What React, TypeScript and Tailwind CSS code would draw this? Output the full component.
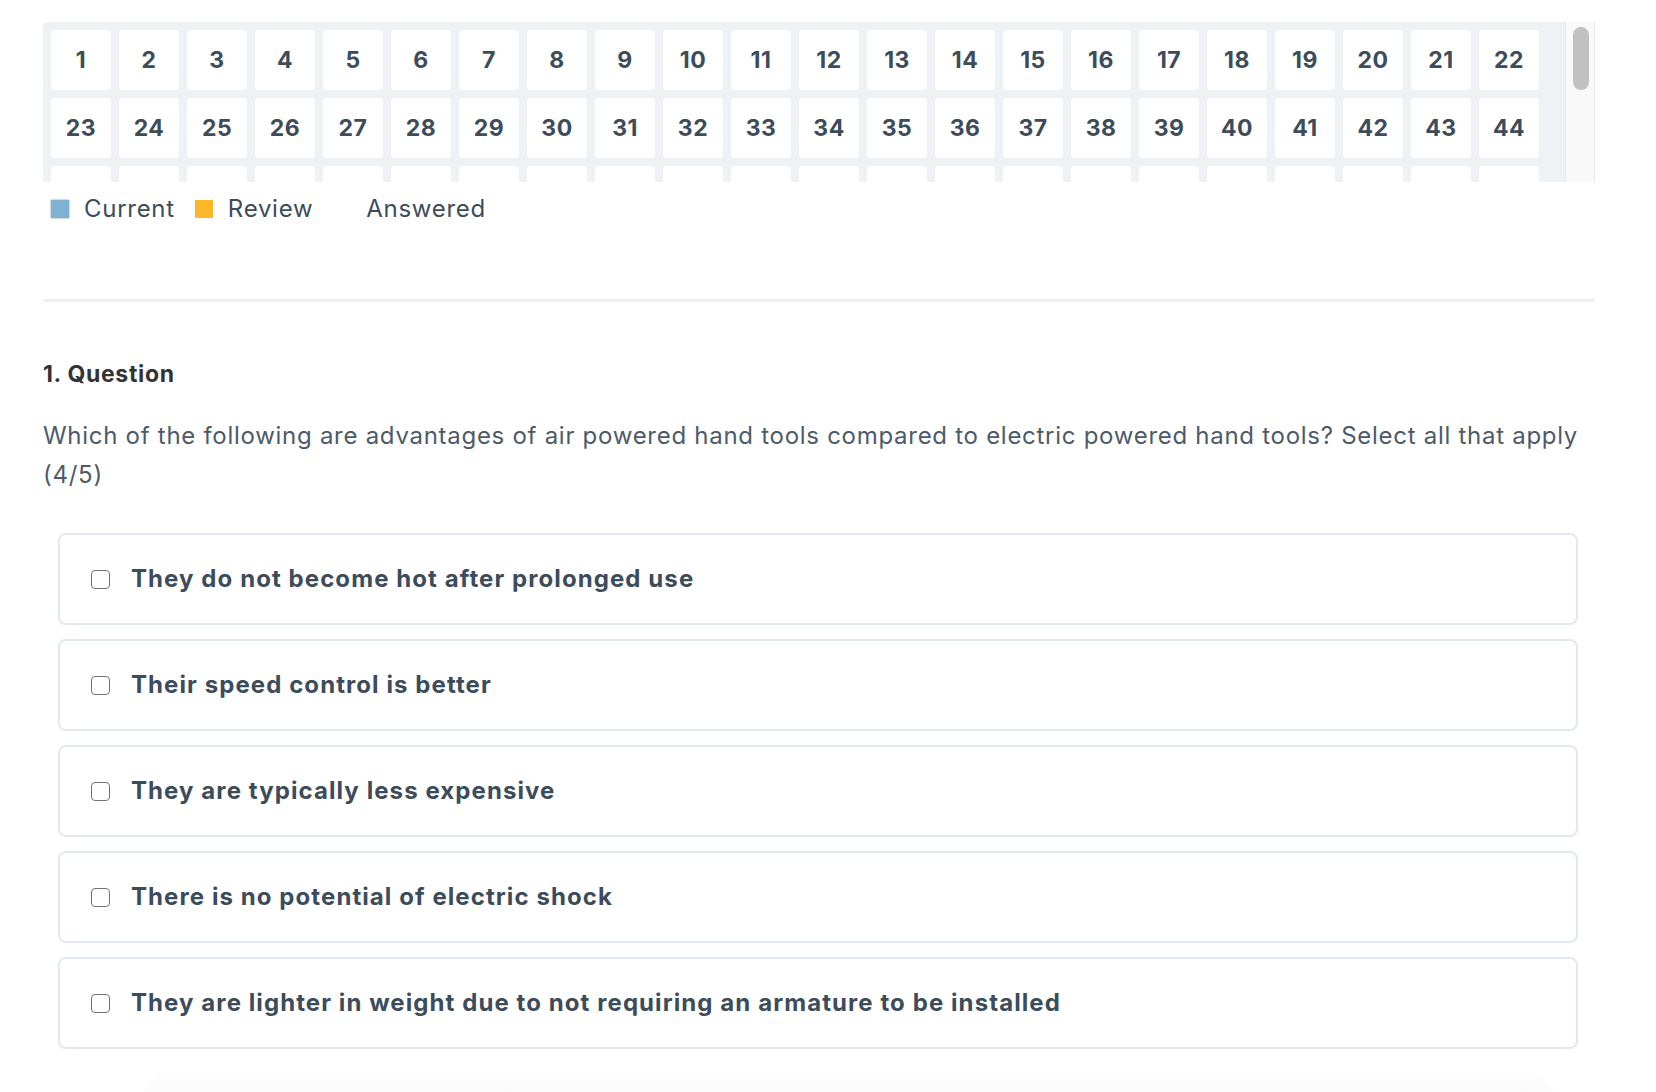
import React from "react";

const options = [
  "They do not become hot after prolonged use",
  "Their speed control is better",
  "They are typically less expensive",
  "There is no potential of electric shock",
  "They are lighter in weight due to not requiring an armature to be installed",
];

function QuestionGrid() {
  return (
    <div className="flex h-[160px] w-[1552px]">
      <div className="h-full flex-1 overflow-hidden rounded-tl-[5px] bg-[#eff2f5] p-2">
        <div className="grid grid-cols-[repeat(22,60px)] gap-2">
          {Array.from({ length: 66 }).map((_, i) => (
            <div
              key={i}
              className="flex h-[60px] items-center justify-center rounded-[4px] bg-white text-[23px] font-bold tracking-[0.02em] text-[#3d4c5a]"
            >
              {i + 1}
            </div>
          ))}
        </div>
      </div>
      {/* scrollbar */}
      <div className="h-full w-[30px] border-x border-[#e8e8e8] bg-[#f9f9f9] pt-[5px] pl-[7px]">
        <div className="h-[63px] w-[16px] rounded-full bg-[#c1c1c1]" />
      </div>
    </div>
  );
}

function Legend() {
  return (
    <div className="mt-[16px] flex h-[22px] items-center pl-[8px] text-[24px] tracking-[0.03em] text-[#3d4c5a]">
      <span className="h-[18px] w-[18px] bg-[#7db2d3] shadow-[0_0_2px_rgba(0,0,0,0.45)]" />
      <span className="ml-[15px]">Current</span>
      <span className="ml-[20px] h-[18px] w-[18px] bg-[#fdb827]" />
      <span className="ml-[15px]">Review</span>
      <span className="ml-[20px] h-[18px] w-[18px] bg-white" />
      <span className="ml-[15px]">Answered</span>
    </div>
  );
}

export default function App() {
  return (
    <div className="min-h-screen overflow-hidden bg-white pl-[43px] pt-[22px] font-['Inter','Open_Sans',sans-serif]">
      <QuestionGrid />
      <Legend />

      <div className="mt-[79px] h-[3px] w-[1552px] bg-[#eef2f5]" />

      <div className="mt-[58px] text-[23px] font-bold leading-[28px] tracking-[0.03em] text-[#333333]">1. Question</div>

      <p className="mt-[28px] w-[1552px] text-[24px] leading-[39px] tracking-[0.03em] text-[#4d5b69]">
        Which of the following are advantages of air powered hand tools compared to electric powered hand tools? Select all that apply (4/5)
      </p>

      <div className="ml-[15px] mt-[39px] flex w-[1520px] flex-col gap-[14px]">
        {options.map((o) => (
          <label
            key={o}
            className="flex h-[92px] items-center gap-[21px] rounded-[8px] border-2 border-[#e2e8ef] bg-white pl-[31px]"
          >
            <span className="h-[19px] w-[19px] shrink-0 rounded-[4px] border-[1.5px] border-[#737373] bg-white" />
            <span className="text-[24px] font-bold tracking-[0.045em] text-[#3d4c5a]">{o}</span>
          </label>
        ))}
      </div>

      <div className="mx-[100px] mt-[16px] h-[40px] rounded-t-[40px] bg-linear-to-b from-white to-[#fafafa]" />
    </div>
  );
}
